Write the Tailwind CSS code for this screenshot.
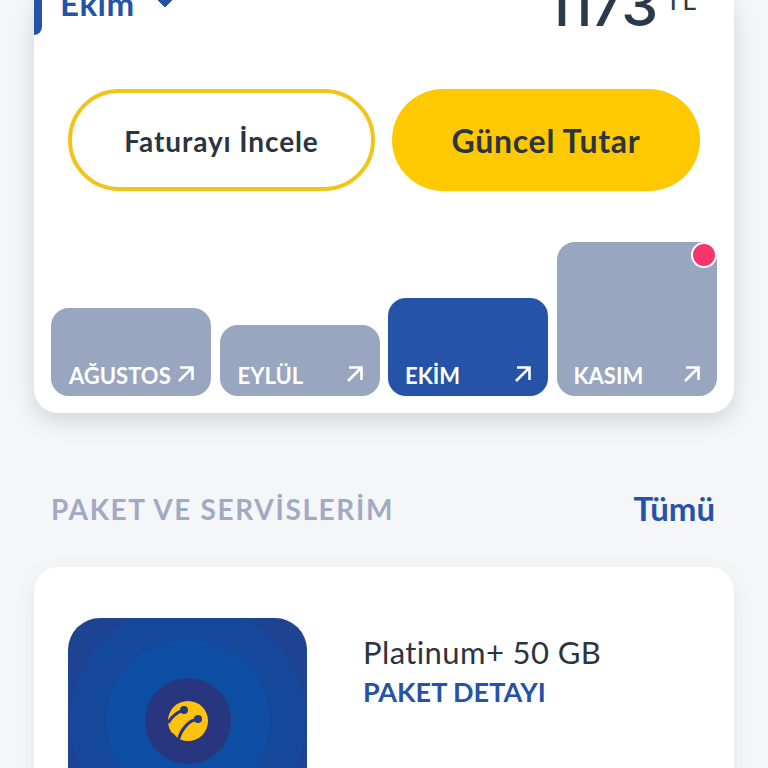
<!DOCTYPE html>
<html lang="en">
<head>
  <meta charset="UTF-8">
  <meta name="viewport" content="width=device-width, initial-scale=1.0">
  <title>Faturalarım</title>
  <script src="https://cdn.jsdelivr.net/npm/@tailwindcss/browser@4"></script>
</head>
<body class="bg-[#f5f6f8] h-[768px] overflow-hidden font-['Lato','Noto_Sans',sans-serif]">
  <div class="px-[34px]">
    <!-- Bill card, scrolled partly off the top -->
    <div class="bg-white rounded-b-[24px] shadow-[0_8px_22px_rgba(30,40,70,0.16)] h-[413px] flex flex-col">
      <div class="flex justify-between h-[89px] overflow-hidden">
        <div class="flex items-start">
          <div class="w-[8px] h-[35px] bg-[#2553a8] rounded-br-[8px]"></div>
          <span class="ml-[18px] -mt-[13px] text-[33px] leading-[32px] font-bold tracking-[0.5px] text-[#2553a8]">Ekim</span>
          <svg class="ml-[20px]" width="20" height="8" viewBox="0 0 20 8"><path d="M1 -2 L10 7 L19 -2 Z" fill="#2553a8" stroke="#2553a8" stroke-linejoin="round"/></svg>
        </div>
        <div class="flex items-start pr-[37px]">
          <span class="-mt-[26px] text-[59px] leading-[62px] font-['Inter',sans-serif] font-medium tracking-[-2px] text-[#2b3a4a]">1173</span>
          <span class="ml-[9px] -mt-[11px] text-[27px] leading-[22px] tracking-[1px] text-[#2b3a4a]">TL</span>
        </div>
      </div>

      <div class="flex gap-[17px] pl-[34px] pr-[34px]">
        <button class="w-[307px] h-[102px] pt-[2px] rounded-full border-[4px] border-[#f2c419] bg-white text-[28px] font-bold tracking-[0.9px] text-[#2b3441]">Faturayı İncele</button>
        <button class="w-[308px] h-[102px] pt-[2px] rounded-full bg-[#ffc900] text-[32px] font-bold tracking-[0.7px] text-[#2b3441]">Güncel Tutar</button>
      </div>

      <!-- Month bars -->
      <div class="flex-1 flex items-end gap-[8.5px] pl-[17px] pr-[17px] pb-[17px]">
        <div class="relative w-[160px] h-[88px] rounded-[18px] bg-[#98a6c0] flex items-end justify-between pl-[18px] pr-[16px] pb-[6px] text-white">
          <span class="text-[22px] leading-[28px] font-bold whitespace-nowrap">AĞUSTOS</span>
          <svg class="mb-[7px]" width="18" height="18" viewBox="0 0 18 18" fill="none" stroke="#fff" stroke-width="2.6"><path d="M3 2.5 H15.5 V15 M15.5 2.5 L2 16"/></svg>
        </div>
        <div class="relative w-[160px] h-[71px] rounded-[18px] bg-[#98a6c0] flex items-end justify-between pl-[18px] pr-[16px] pb-[6px] text-white">
          <span class="text-[22px] leading-[28px] font-bold">EYLÜL</span>
          <svg class="mb-[7px]" width="18" height="18" viewBox="0 0 18 18" fill="none" stroke="#fff" stroke-width="2.6"><path d="M3 2.5 H15.5 V15 M15.5 2.5 L2 16"/></svg>
        </div>
        <div class="relative w-[160px] h-[98px] rounded-[18px] bg-[#2553a8] flex items-end justify-between pl-[17px] pr-[16px] pb-[6px] text-white">
          <span class="text-[22px] leading-[28px] font-bold">EKİM</span>
          <svg class="mb-[7px]" width="18" height="18" viewBox="0 0 18 18" fill="none" stroke="#fff" stroke-width="2.6"><path d="M3 2.5 H15.5 V15 M15.5 2.5 L2 16"/></svg>
        </div>
        <div class="relative w-[160px] h-[154px] rounded-[18px] bg-[#98a6c0] flex items-end justify-between pl-[17px] pr-[16px] pb-[6px] text-white">
          <span class="text-[22px] leading-[28px] font-bold">KASIM</span>
          <svg class="mb-[7px]" width="18" height="18" viewBox="0 0 18 18" fill="none" stroke="#fff" stroke-width="2.6"><path d="M3 2.5 H15.5 V15 M15.5 2.5 L2 16"/></svg>
          <div class="absolute top-0 right-0 w-[26px] h-[26px] rounded-full bg-[#f8346c] border-[2px] border-white"></div>
        </div>
      </div>
    </div>

    <!-- Section header -->
    <div class="flex justify-between items-center h-[154px] pl-[17px] pr-[19px] pt-[38px]">
      <span class="text-[28px] font-bold tracking-[1.65px] text-[#9fabc4]">PAKET VE SERVİSLERİM</span>
      <span class="text-[33px] font-bold text-[#2553a8]">Tümü</span>
    </div>

    <!-- Package card -->
    <div class="bg-white rounded-[24px] h-[300px] shadow-[0_8px_22px_rgba(30,40,70,0.08)] pt-[51px] pl-[34px] flex items-start">
      <div class="relative w-[239px] h-[205px] rounded-t-[32px] overflow-hidden bg-[#1d4392] flex items-center justify-center">
        <div class="absolute w-[236px] h-[236px] rounded-full bg-[#15479b]"></div>
        <div class="absolute w-[164px] h-[164px] rounded-full bg-[#0d4da3]"></div>
        <div class="relative w-[86px] h-[86px] rounded-full bg-[#27367f] flex items-center justify-center">
          <svg width="42" height="42" viewBox="0 0 42 42">
            <circle cx="21" cy="21" r="20" fill="#ffc20e"/>
            <path d="M0 35 L0 42 L14 42 L6 33 Z" fill="#27367f"/>
            <path d="M17 10 C10 12 5 16 1 23 M31 19 C22 20 14 29 11 41" stroke="#27367f" stroke-width="3" fill="none"/>
            <circle cx="17" cy="10" r="4" fill="#27367f"/>
            <circle cx="31" cy="19" r="4" fill="#27367f"/>
          </svg>
        </div>
      </div>
      <div class="ml-[56px] mt-[12px]">
        <p class="text-[31px] leading-[44px] tracking-[0.4px] text-[#2b3441]">Platinum+ 50 GB</p>
        <p class="text-[27px] leading-[36px] font-bold text-[#2553a8]">PAKET DETAYI</p>
      </div>
    </div>
  </div>
</body>
</html>
